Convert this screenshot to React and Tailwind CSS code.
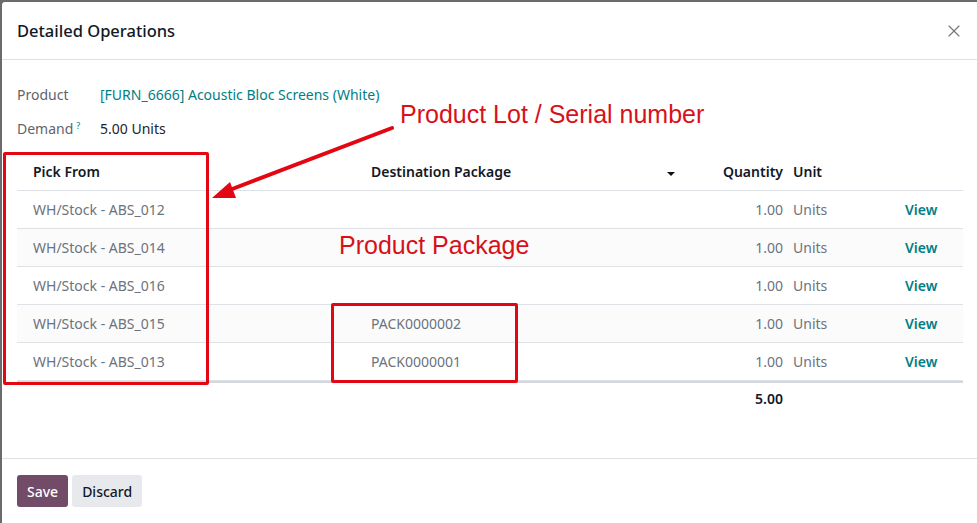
import { X } from 'lucide-react';

const rows = [
  { from: 'WH/Stock - ABS_012', pack: '' },
  { from: 'WH/Stock - ABS_014', pack: '' },
  { from: 'WH/Stock - ABS_016', pack: '' },
  { from: 'WH/Stock - ABS_015', pack: 'PACK0000002' },
  { from: 'WH/Stock - ABS_013', pack: 'PACK0000001' },
];

function Row({ row, striped }) {
  return (
    <div className={`flex h-[38px] items-center border-b border-[#dee2e6] pb-[1px] text-[14px] text-[#6c737c] ${striped ? 'bg-[#fbfbfb]' : ''}`}>
      <div className="w-[338px] pl-4">{row.from}</div>
      <div className="w-[335px] pl-4">{row.pack}</div>
      <div className="w-[100px] pr-[7px] text-right">1.00</div>
      <div className="w-[115px] pl-[3px]">Units</div>
      <div className="font-semibold text-[#017e84]">View</div>
    </div>
  );
}

export default function App() {
  return (
    <div className="h-[523px] w-[977px] overflow-hidden bg-[#6b6b6b] pl-[2px] pt-[2px]" style={{ fontFamily: '"Noto Sans", sans-serif' }}>
      <div className="relative flex h-full flex-col rounded-tl-[3px] bg-white">
        <div className="flex h-[58px] items-center justify-between border-b border-[#dee2e6] pl-[15px] pr-[13px]">
          <h1 className="mt-[1px] text-[16.5px] font-medium text-[#111827]">Detailed Operations</h1>
          <X size={20} strokeWidth={1.4} className="mt-[1px] text-[#777]" />
        </div>

        <div className="flex-1 px-[15px]">
          <div className="mt-[22px] flex h-[24px] items-center text-[14px]">
            <span className="w-[83px] text-[#5f646c]">Product</span>
            <span className="text-[#017e84]">[FURN_6666] Acoustic Bloc Screens (White)</span>
          </div>
          <div className="mt-[10px] flex h-[24px] items-center text-[14px]">
            <span className="w-[83px] text-[#5f646c]">
              Demand<sup className="ml-[3px] text-[9px] text-[#017e84]">?</sup>
            </span>
            <span className="text-[#212529]">5.00 Units</span>
          </div>

          <div className="mt-[13px] w-[946px]">
            <div className="flex h-[38px] items-center border-b border-[#dee2e6] pb-[1px] text-[14px] font-semibold text-[#111827]">
              <div className="w-[338px] pl-4">Pick From</div>
              <div className="flex w-[335px] items-center pl-4 pr-[15px]">
                <span>Destination Package</span>
                <span className="ml-auto mt-[6px] h-0 w-0 border-x-[4px] border-t-[4px] border-x-transparent border-t-[#111]" />
              </div>
              <div className="w-[100px] pr-[7px] text-right">Quantity</div>
              <div className="pl-[3px]">Unit</div>
            </div>
            {rows.map((r, i) => (
              <Row key={r.from} row={r} striped={i % 2 === 1} />
            ))}
            <div className="flex h-[33px] items-center border-t-2 border-[#d4d7db] text-[14px] font-semibold text-[#111827]">
              <div className="w-[773px] pr-[7px] text-right">5.00</div>
            </div>
          </div>
        </div>

        <div className="flex h-[65px] gap-1 border-t border-[#dee2e6] px-[15px] pt-4">
          <button className="h-[32px] rounded-[3px] bg-[#714b67] px-[10px] text-[14px] font-medium text-white">Save</button>
          <button className="h-[32px] rounded-[3px] bg-[#e7e9ed] px-[10px] text-[14px] font-medium text-[#111827]">Discard</button>
        </div>

        {/* annotations */}
        <div className="pointer-events-none absolute left-[1px] top-[150px] h-[233px] w-[206px] rounded-[2px] border-[3px] border-[#e30613]" />
        <div className="pointer-events-none absolute left-[329px] top-[301px] h-[80px] w-[187px] rounded-[2px] border-[3px] border-[#e30613]" />
        <div className="absolute left-[398px] top-[94px] text-[25px] text-[#d6111b]" style={{ fontFamily: '"Liberation Sans", Arial, sans-serif' }}>
          Product Lot / Serial number
        </div>
        <div className="absolute left-[337px] top-[225px] text-[25px] text-[#d6111b]" style={{ fontFamily: '"Liberation Sans", Arial, sans-serif' }}>
          Product Package
        </div>
        <svg className="absolute left-0 top-0" width="975" height="521">
          <line x1="390" y1="126" x2="225" y2="189" stroke="#e30613" strokeWidth="4" strokeLinecap="round" />
          <polygon points="210,196 228,180 234,196" fill="#e30613" />
        </svg>
      </div>
    </div>
  );
}
